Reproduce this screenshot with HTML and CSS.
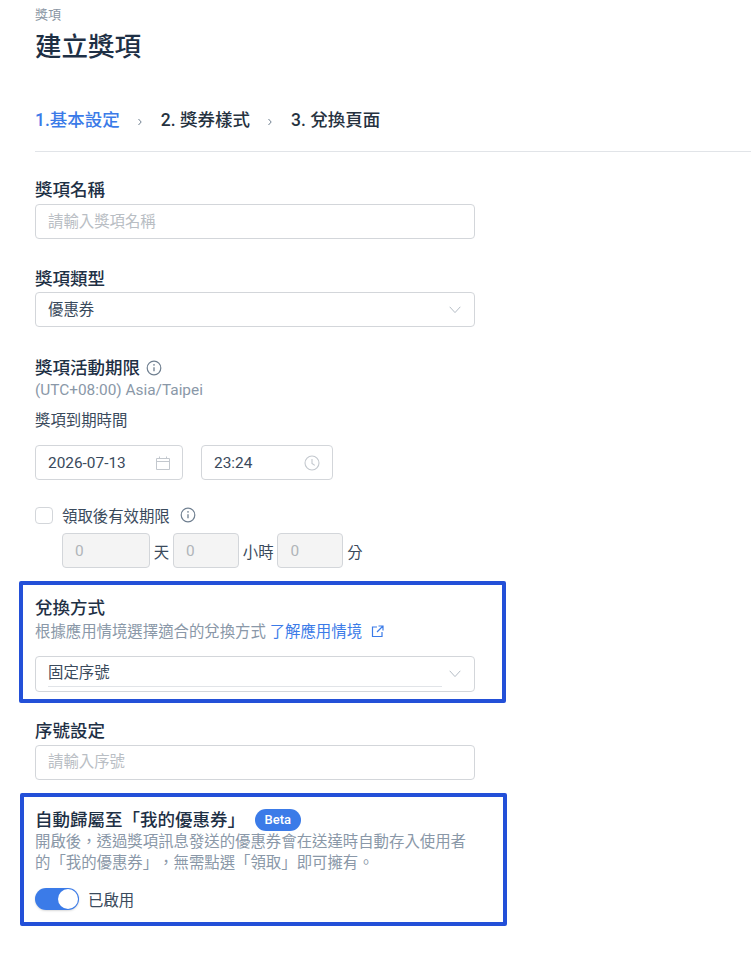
FILE: index.html
```html
<!DOCTYPE html>
<html lang="zh-Hant">
<head>
  <meta charset="UTF-8">
  <meta name="viewport" content="width=device-width, initial-scale=1.0">
  <title>建立獎項</title>
  <link rel="stylesheet" href="styles.css">
</head>
<body>
  <div class="breadcrumb">獎項</div>
  <h1>建立獎項</h1>

  <div class="steps">
    <span class="step active">1.基本設定</span>
    <svg class="step-arrow" width="6" height="10" viewBox="0 0 6 10"><path d="M1.5 2 L4.2 5 L1.5 8" fill="none" stroke="#6f7f90" stroke-width="1"/></svg>
    <span class="step">2. 獎券樣式</span>
    <svg class="step-arrow" width="6" height="10" viewBox="0 0 6 10"><path d="M1.5 2 L4.2 5 L1.5 8" fill="none" stroke="#6f7f90" stroke-width="1"/></svg>
    <span class="step">3. 兌換頁面</span>
  </div>

  <div class="field name-field">
    <div class="label">獎項名稱</div>
    <div class="input placeholder">請輸入獎項名稱</div>
  </div>

  <div class="field type-field">
    <div class="label">獎項類型</div>
    <div class="input select">
      <span>優惠券</span>
      <svg class="chevron" width="12" height="8" viewBox="0 0 12 8"><path d="M0.7 0.8 L6 6.6 L11.3 0.8" fill="none" stroke="#b4bcc5" stroke-width="1"/></svg>
    </div>
  </div>

  <div class="field period-field">
    <div class="label with-icon">
      獎項活動期限
      <svg class="info" width="16" height="16" viewBox="0 0 16 16"><circle cx="8" cy="8" r="6.8" fill="none" stroke="#6f7f90" stroke-width="1.2"/><circle cx="8" cy="4.9" r="0.8" fill="#6f7f90"/><path d="M8 7.2 V11.2" stroke="#6f7f90" stroke-width="1.3"/></svg>
    </div>
    <div class="timezone">(UTC+08:00) Asia/Taipei</div>
    <div class="sub-label">獎項到期時間</div>
    <div class="date-row">
      <div class="input date-input">
        <span>2026-07-13</span>
        <svg width="14" height="14" viewBox="0 0 14 14"><path d="M0.5 2.5 H13.5 V13.5 H0.5 Z M0.5 5.5 H13.5 M3.5 0.5 V3 M10.5 0.5 V3" fill="none" stroke="#c3c8ce" stroke-width="1"/></svg>
      </div>
      <div class="input time-input">
        <span>23:24</span>
        <svg width="16" height="16" viewBox="0 0 16 16"><circle cx="8" cy="8" r="7" fill="none" stroke="#c3c8ce" stroke-width="1.1"/><path d="M8 4 V8.4 L10.8 10.4" fill="none" stroke="#c3c8ce" stroke-width="1.1"/></svg>
      </div>
    </div>
  </div>

  <div class="check-row">
    <span class="checkbox"></span>
    <span class="check-text">領取後有效期限</span>
    <svg class="info" width="16" height="16" viewBox="0 0 16 16"><circle cx="8" cy="8" r="6.8" fill="none" stroke="#6f7f90" stroke-width="1.2"/><circle cx="8" cy="4.9" r="0.8" fill="#6f7f90"/><path d="M8 7.2 V11.2" stroke="#6f7f90" stroke-width="1.3"/></svg>
  </div>
  <div class="duration-row">
    <div class="input disabled days">0</div>
    <span class="unit">天</span>
    <div class="input disabled short">0</div>
    <span class="unit">小時</span>
    <div class="input disabled short">0</div>
    <span class="unit">分</span>
  </div>

  <section class="highlight redeem-box">
    <div class="label">兌換方式</div>
    <div class="desc redeem-desc">根據應用情境選擇適合的兌換方式 <a class="link" href="#">了解應用情境</a>
      <svg class="external" width="13" height="13" viewBox="0 0 13 13"><path d="M6 2 H1.5 V11.5 H11 V7 M7.5 1 H12 V5.5 M12 1 L6 7" fill="none" stroke="#3b7be8" stroke-width="1.2"/></svg>
    </div>
    <div class="input select redeem-select">
      <span>固定序號</span>
      <svg class="chevron" width="12" height="8" viewBox="0 0 12 8"><path d="M0.7 0.8 L6 6.6 L11.3 0.8" fill="none" stroke="#b4bcc5" stroke-width="1"/></svg>
      <div class="select-line"></div>
    </div>
  </section>

  <div class="field code-field">
    <div class="label">序號設定</div>
    <div class="input placeholder">請輸入序號</div>
  </div>

  <section class="highlight auto-box">
    <div class="label with-badge">自動歸屬至「我的優惠券」<span class="badge">Beta</span></div>
    <p class="desc auto-desc">開啟後，透過獎項訊息發送的優惠券會在送達時自動存入使用者的「我的優惠券」，無需點選「領取」即可擁有。</p>
    <div class="toggle-row">
      <span class="toggle"><span class="knob"></span></span>
      <span class="toggle-text">已啟用</span>
    </div>
  </section>
</body>
</html>
```

FILE: styles.css
```css
body {
  font-family: 'Roboto', 'Noto Sans CJK TC', sans-serif;
  background-color: #fff;
  color: #3a4a5c;
  margin: 0;
  padding: 8px 0 0 35px;
  font-size: 15.4px;
  text-spacing-trim: space-all;
}

.breadcrumb {
  font-size: 13px;
  line-height: 14px;
  color: #8a96a3;
}

h1 {
  font-size: 26.5px;
  line-height: 36px;
  font-weight: 500;
  color: #1e3045;
  margin: 7px 0 0;
}

.steps {
  display: flex;
  align-items: center;
  height: 24px;
  margin-top: 41px;
  padding-bottom: 21px;
  border-bottom: 1px solid #e1e4e8;
  font-size: 17.5px;
}

.step {
  font-weight: 500;
  color: #26323f;
}

.step.active {
  color: #3b7be8;
}

.step-arrow {
  margin: 8px 18px 0 17px;
}

.field {
  width: 440px;
}

.label {
  font-size: 17.5px;
  line-height: 24px;
  font-weight: 500;
  color: #1e3045;
}

.name-field {
  margin-top: 26px;
}

.type-field {
  margin-top: 28px;
}

.type-field .input {
  margin-top: 1px;
}

.period-field {
  margin-top: 29px;
}

.code-field {
  margin-top: 16px;
}

.code-field .input {
  padding-bottom: 5px;
}

.input {
  box-sizing: border-box;
  height: 35px;
  margin-top: 2px;
  padding: 0 13px 0 12px;
  display: flex;
  align-items: center;
  border: 1px solid #d3d6da;
  border-radius: 4px;
  color: #3a4a5c;
  background-color: #fff;
}

.placeholder {
  padding-bottom: 3px;
  color: #b9bec4;
}

.select {
  justify-content: space-between;
  width: 440px;
}

.select span {
  margin-bottom: 3px;
}

.chevron {
  display: block;
}

.with-icon {
  display: flex;
  align-items: center;
  gap: 6px;
}

.timezone {
  line-height: 20px;
  color: #8a98a8;
}

.sub-label {
  line-height: 20px;
  margin-top: 11px;
}

.date-row {
  display: flex;
  gap: 18px;
  margin-top: 14px;
}

.date-row .input {
  margin-top: 0;
  justify-content: space-between;
  padding-right: 12px;
}

.date-input {
  width: 148px;
}

.time-input {
  width: 132px;
}

.check-row {
  display: flex;
  align-items: center;
  margin-top: 25px;
  height: 20px;
}

.checkbox {
  box-sizing: border-box;
  width: 18px;
  height: 17px;
  border: 1px solid #d3d6da;
  border-radius: 4px;
}

.check-text {
  margin: 0 10px 0 9px;
}

.duration-row {
  display: flex;
  align-items: center;
  margin: 8px 0 0 27px;
}

.duration-row .input {
  margin-top: 0;
  background-color: #f4f4f4;
  color: #b0b4b9;
}

.days {
  width: 88px;
}

.short {
  width: 66px;
}

.unit {
  padding: 0 3.8px;
}

.highlight {
  box-sizing: border-box;
  width: 487px;
  margin-left: -16px;
  border: 4px solid #2350d8;
  border-radius: 2px;
  padding: 11px 12px 0;
}

.redeem-box {
  height: 122px;
  margin-top: 13px;
}

.desc {
  line-height: 21px;
  color: #8a98a8;
}

.redeem-desc {
  margin-top: 2px;
}

.link {
  color: #3b7be8;
  text-decoration: none;
}

.external {
  margin-left: 5px;
  vertical-align: -1px;
}

.redeem-select {
  position: relative;
  margin-top: 13px;
  height: 36px;
}

.redeem-select span {
  margin-bottom: 6px;
}

.select-line {
  position: absolute;
  left: 12px;
  right: 32px;
  bottom: 4px;
  height: 1px;
  background-color: #e1e4e8;
}

.auto-box {
  height: 133px;
  margin-top: 13px;
  margin-left: -15px;
  padding-left: 11px;
}

.with-badge {
  display: flex;
  align-items: center;
}

.badge {
  margin-left: 10px;
  padding: 0 9.5px;
  height: 22px;
  line-height: 22px;
  border-radius: 11px;
  background-color: #3b7be8;
  color: #fff;
  font-size: 13px;
}

.auto-desc {
  width: 440px;
  margin: 0;
}

.toggle-row {
  display: flex;
  align-items: center;
  gap: 9px;
  margin-top: 14px;
}

.toggle {
  display: flex;
  justify-content: flex-end;
  align-items: center;
  box-sizing: border-box;
  width: 44px;
  height: 22px;
  padding: 1px;
  border-radius: 11px;
  background-color: #3b7be8;
  box-shadow: 0 1px 2px rgba(0, 0, 0, 0.15);
}

.knob {
  width: 20px;
  height: 20px;
  border-radius: 50%;
  background-color: #fff;
}
```
